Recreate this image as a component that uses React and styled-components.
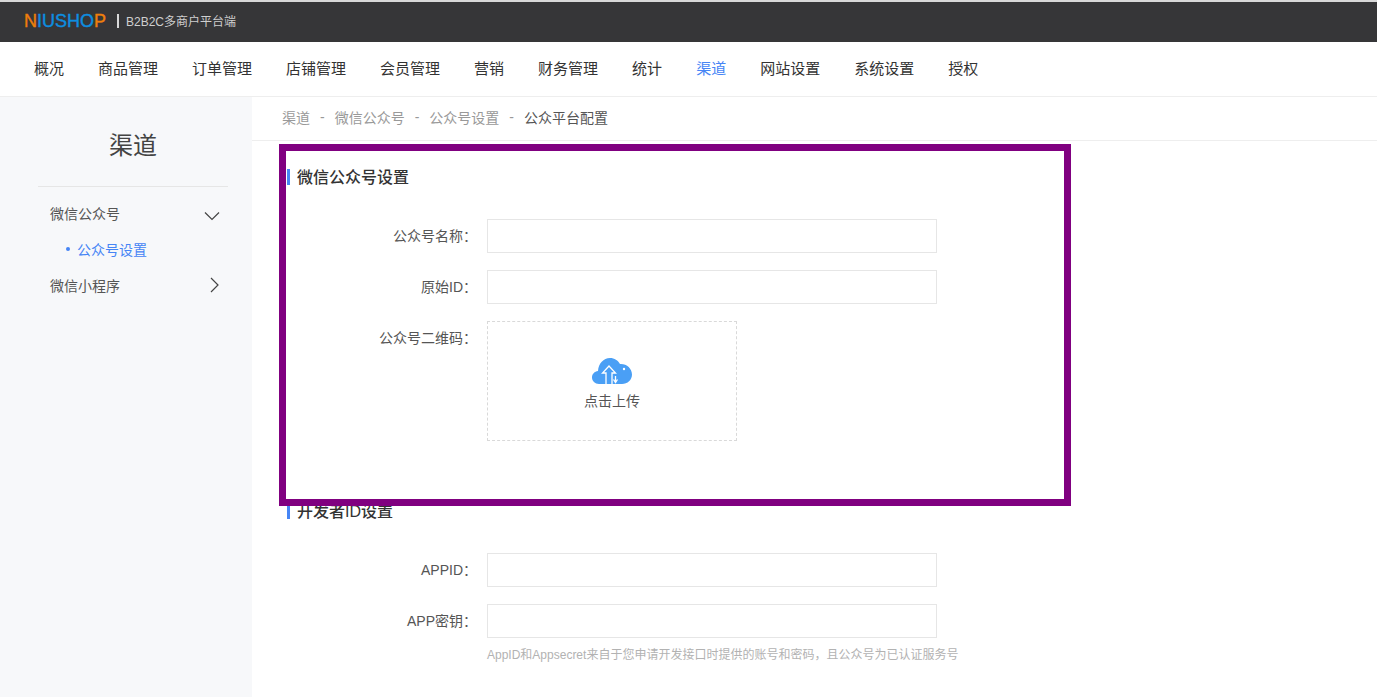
import React from 'react';
import styled, { createGlobalStyle } from 'styled-components';

const GlobalStyle = createGlobalStyle`
    html, body {
        margin: 0;
        padding: 0;
        height: 100%;
        overflow: hidden;
        background: #fff;
        font-family: "Liberation Sans", "Noto Sans CJK SC", sans-serif;
    }
    * {
        box-sizing: border-box;
    }
`

const Page = styled.div`
    position: relative;
    height: 697px;
    display: flex;
    flex-direction: column;
`

const TopBar = styled.div`
    height: 42px;
    flex: none;
    display: flex;
    align-items: center;
    padding: 0 0 3px 24px;
    background: #363638;
    border-top: 2px solid #d8d8d8;
`

const Logo = styled.span`
    font-size: 18px;
    line-height: 20px;
    color: #0d8ee0;
    width: 83px;
    white-space: nowrap;
    -webkit-text-stroke: 0.4px currentColor;
`

const LogoMark = styled.span`
    color: #ee7e0c;
`

const Divider = styled.span`
    width: 2px;
    height: 14px;
    margin: 0 7px 0 10px;
    background: #d8d8d8;
`

const SubTitle = styled.span`
    font-size: 12px;
    color: #cfcfcf;
`

const Nav = styled.div`
    height: 55px;
    flex: none;
    display: flex;
    align-items: center;
    gap: 34px;
    padding: 0 0 4px 34px;
    border-bottom: 1px solid #eeeeee;
`

const NavItem = styled.span`
    font-size: 15px;
    color: ${props => props.$active ? '#4685f5' : '#333'};
`

const Body = styled.div`
    flex: 1;
    display: flex;
    min-height: 0;
`

const Sidebar = styled.div`
    width: 252px;
    flex: none;
    background: #f7f8fa;
`

const SideTitle = styled.div`
    height: 90px;
    margin: 0 24px 0 38px;
    padding-top: 31px;
    text-align: center;
    font-size: 24px;
    line-height: 36px;
    color: #444;
    border-bottom: 1px solid #e6e6e6;
`

const SideList = styled.div`
    padding: 8px 32px 0 50px;
`

const SideRow = styled.div`
    height: 36px;
    display: flex;
    align-items: center;
    justify-content: space-between;
    font-size: 14px;
    color: #555;
`

const SideChild = styled.div`
    height: 36px;
    display: flex;
    align-items: center;
    gap: 7px;
    padding-left: 16px;
    font-size: 14px;
    color: #4685f5;
`

const Dot = styled.span`
    width: 4px;
    height: 4px;
    border-radius: 50%;
    background: #4685f5;
`

const Main = styled.div`
    flex: 1;
    min-width: 0;
`

const Crumbs = styled.div`
    height: 44px;
    display: flex;
    align-items: center;
    gap: 10px;
    padding: 0 0 3px 30px;
    border-bottom: 1px solid #eeeeee;
    font-size: 14px;
    color: #999;
`

const CrumbCurrent = styled.span`
    color: #555;
`

const Content = styled.div`
    padding: 28px 0 0 35px;
`

const SectionTitle = styled.div`
    height: 16px;
    margin-top: ${props => props.$top}px;
    margin-bottom: 34px;
    display: flex;
    align-items: center;
    padding: 0 0 2px 7px;
    border-left: 3px solid #4685f5;
    font-size: 16px;
    font-weight: 500;
    color: #333;
`

const Row = styled.div`
    display: flex;
    margin-bottom: 17px;
`

const Label = styled.label`
    width: 190px;
    flex: none;
    margin-right: 10px;
    text-align: right;
    font-size: 14px;
    line-height: 34px;
    color: #555;
`

const Field = styled.div`
    width: 450px;
    height: 34px;
    background: #fff;
    border: 1px solid #e6e6e6;
`

const Upload = styled.div`
    width: 250px;
    height: 120px;
    display: flex;
    flex-direction: column;
    align-items: center;
    padding-top: 36px;
    gap: 8px;
    border: 1px dashed #d9d9d9;
    font-size: 14px;
    line-height: 18px;
    color: #555;
`

const Hint = styled.div`
    margin: -9px 0 0 200px;
    font-size: 12px;
    line-height: 18px;
    color: #b2b2b2;
`

const Highlight = styled.div`
    position: absolute;
    left: 279px;
    top: 144px;
    width: 792px;
    height: 362px;
    border: 7px solid #800080;
`

const CloudIcon = () => (
    <svg width="40" height="26" viewBox="0 0 40 26">
        <path fill="#4a9ff5" d="M7 26C3 26 0 23 0 19.500S2.500 13.500 6 13C6.500 5.500 11.500 0 18 0C22.500 0 26 2.500 28 6C34.500 5.500 40 10.500 40 16.500C40 22 35.500 26 30 26Z" />
        <path fill="none" stroke="#fff" strokeWidth="1.3" d="M14 26V15H10.500L17 8L23.500 15H20V26" />
        <path fill="none" stroke="#fff" strokeWidth="1.3" d="M23.500 18V24M21.500 21.500L23.500 24.500L25.500 21.500" />
        <circle cx="32" cy="11" r="1.200" fill="#fff" />
    </svg>
)

const ChevronDown = () => (
    <svg width="16" height="16" viewBox="0 0 16 16">
        <path fill="none" stroke="#444" strokeWidth="1.2" d="M1 7.500L8 14.500L15 7.500" />
    </svg>
)

const ChevronRight = () => (
    <svg width="16" height="16" viewBox="0 0 16 16">
        <path fill="none" stroke="#444" strokeWidth="1.2" d="M7 1L14 8L7 15" />
    </svg>
)

const navItems = ['概况', '商品管理', '订单管理', '店铺管理', '会员管理', '营销', '财务管理', '统计', '渠道', '网站设置', '系统设置', '授权'];
const crumbs = ['渠道', '微信公众号', '公众号设置'];

function App() {
    return (
        <Page>
            <GlobalStyle />
            <TopBar>
                <Logo><LogoMark>N</LogoMark>IUSHO<LogoMark>P</LogoMark></Logo>
                <Divider />
                <SubTitle>B2B2C多商户平台端</SubTitle>
            </TopBar>
            <Nav>
                {navItems.map(item => (
                    <NavItem key={item} $active={item === '渠道'}>{item}</NavItem>
                ))}
            </Nav>
            <Body>
                <Sidebar>
                    <SideTitle>渠道</SideTitle>
                    <SideList>
                        <SideRow>微信公众号<ChevronDown /></SideRow>
                        <SideChild><Dot />公众号设置</SideChild>
                        <SideRow>微信小程序<ChevronRight /></SideRow>
                    </SideList>
                </Sidebar>
                <Main>
                    <Crumbs>
                        {crumbs.map(item => (
                            <React.Fragment key={item}>
                                <span>{item}</span>
                                <span>-</span>
                            </React.Fragment>
                        ))}
                        <CrumbCurrent>公众平台配置</CrumbCurrent>
                    </Crumbs>
                    <Content>
                        <SectionTitle $top={0}>微信公众号设置</SectionTitle>
                        <Row>
                            <Label>公众号名称：</Label>
                            <Field />
                        </Row>
                        <Row>
                            <Label>原始ID：</Label>
                            <Field />
                        </Row>
                        <Row>
                            <Label>公众号二维码：</Label>
                            <Upload>
                                <CloudIcon />
                                点击上传
                            </Upload>
                        </Row>
                        <SectionTitle $top={62}>开发者ID设置</SectionTitle>
                        <Row>
                            <Label>APPID：</Label>
                            <Field />
                        </Row>
                        <Row>
                            <Label>APP密钥：</Label>
                            <Field />
                        </Row>
                        <Hint>AppID和Appsecret来自于您申请开发接口时提供的账号和密码，且公众号为已认证服务号</Hint>
                    </Content>
                </Main>
            </Body>
            <Highlight />
        </Page>
    );
}

export default App;
